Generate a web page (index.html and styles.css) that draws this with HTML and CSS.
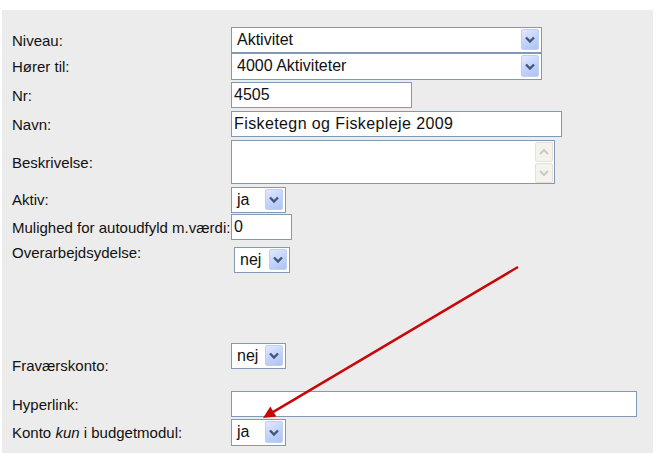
FILE: index.html
```html
<!DOCTYPE html>
<html lang="da">
<head>
<meta charset="utf-8">
<title>Konto</title>
<link rel="stylesheet" href="styles.css">
</head>
<body>
<div class="panel">
  <div class="row r-niveau">
    <div class="lbl">Niveau:</div>
    <div class="sel w-long"><span class="val">Aktivitet</span><span class="btn"><svg viewBox="0 0 18 21" width="18" height="21"><path d="M5 8.5 L9 12.5 L13 8.5" /></svg></span></div>
  </div>
  <div class="row r-horer">
    <div class="lbl">Hører til:</div>
    <div class="sel w-long"><span class="val">4000 Aktiviteter</span><span class="btn"><svg viewBox="0 0 18 21" width="18" height="21"><path d="M5 8.5 L9 12.5 L13 8.5" /></svg></span></div>
  </div>
  <div class="row r-nr">
    <div class="lbl">Nr:</div>
    <div class="inp w-nr">4505</div>
  </div>
  <div class="row r-navn">
    <div class="lbl">Navn:</div>
    <div class="inp w-navn">Fisketegn og Fiskepleje 2009</div>
  </div>
  <div class="row r-beskr">
    <div class="lbl">Beskrivelse:</div>
    <div class="area">
      <div class="area-text"></div>
      <div class="sbar">
        <span class="sbtn"><svg viewBox="0 0 18 20" width="18" height="20"><path d="M5 12 L9 8 L13 12" /></svg></span>
        <span class="sbtn"><svg viewBox="0 0 18 20" width="18" height="20"><path d="M5 8 L9 12 L13 8" /></svg></span>
      </div>
    </div>
  </div>
  <div class="row r-aktiv">
    <div class="lbl">Aktiv:</div>
    <div class="sel w-short"><span class="val">ja</span><span class="btn"><svg viewBox="0 0 18 21" width="18" height="21"><path d="M5 8.5 L9 12.5 L13 8.5" /></svg></span></div>
  </div>
  <div class="row r-mul">
    <div class="lbl">Mulighed for autoudfyld m.værdi:</div>
    <div class="inp w-mul">0</div>
  </div>
  <div class="row r-over">
    <div class="lbl">Overarbejdsydelse:</div>
    <div class="sel w-nej"><span class="val">nej</span><span class="btn"><svg viewBox="0 0 18 21" width="18" height="21"><path d="M5 8.5 L9 12.5 L13 8.5" /></svg></span></div>
  </div>
  <div class="row r-frav">
    <div class="lbl">Fraværskonto:</div>
    <div class="sel w-short"><span class="val">nej</span><span class="btn"><svg viewBox="0 0 18 21" width="18" height="21"><path d="M5 8.5 L9 12.5 L13 8.5" /></svg></span></div>
  </div>
  <div class="row r-hyper">
    <div class="lbl">Hyperlink:</div>
    <div class="inp w-hyper"></div>
  </div>
  <div class="row r-konto">
    <div class="lbl">Konto <i>kun</i> i budgetmodul:</div>
    <div class="sel w-short"><span class="val">ja</span><span class="btn"><svg viewBox="0 0 18 21" width="18" height="21"><path d="M5 8.5 L9 12.5 L13 8.5" /></svg></span></div>
  </div>
</div>
<svg class="annot" viewBox="0 0 658 453" width="658" height="453">
  <line x1="518" y1="267" x2="272.5" y2="412.4" />
  <polygon points="263,418 276.3,416.6 270.3,406.4" />
</svg>
</body>
</html>
```

FILE: styles.css
```css
html, body {
  margin: 0;
  padding: 0;
  background: #ffffff;
}

body {
  width: 658px;
  height: 453px;
  overflow: hidden;
  position: relative;
  font-family: "Liberation Sans", Arial, sans-serif;
  color: #111111;
}

.panel {
  margin: 10px 5px 0 2px;
  height: 443px;
  box-sizing: border-box;
  background: #ececec;
  padding: 17px 0 0 10px;
}

.row {
  display: flex;
  align-items: center;
  height: 26px;
}

.lbl {
  width: 219px;
  flex: none;
  font-size: 15px;
  line-height: 17px;
  white-space: nowrap;
}

.r-horer { height: 27px; }
.r-nr { margin-top: 2px; }
.r-navn { margin-top: 3px; }
.r-beskr { margin-top: 3px; height: 44px; }
.r-aktiv { margin-top: 3px; }
.r-aktiv .lbl { margin-top: -2px; }
.r-mul { margin-top: 1px; }
.r-over {
  margin-top: 3px;
  height: 97px;
  align-items: flex-start;
}
.r-over .lbl { padding-top: 1px; }
.r-over .sel { margin-top: 4px; margin-left: 3px; }
.r-frav {
  margin-top: 3px;
  height: 31px;
  align-items: flex-start;
}
.r-frav .lbl { align-self: flex-end; }
.r-hyper { margin-top: 17px; }
.r-konto { margin-top: 2px; height: 27px; }

/* fake select */
.sel {
  display: flex;
  box-sizing: border-box;
  height: 100%;
  border: 1px solid #8398b2;
  background: #ffffff;
  padding: 1px 2px 2px 0;
  font-size: 16px;
}
.r-over .sel, .r-frav .sel { height: 26px; }

.sel .val {
  flex: 1;
  padding-left: 5px;
  align-self: center;
  line-height: 18px;
  white-space: nowrap;
  overflow: hidden;
}

.btn {
  flex: none;
  width: 18px;
  box-sizing: border-box;
  border: 1px solid #c0d0f5;
  border-radius: 2px;
  background: linear-gradient(150deg, #e2eafe 0%, #c3d4fb 50%, #afc3f2 100%);
  display: flex;
  align-items: center;
  justify-content: center;
  overflow: hidden;
}
.btn svg { flex: none; }
.btn path {
  fill: none;
  stroke: #45567c;
  stroke-width: 2.4;
}

.w-long { width: 311px; }
.w-short { width: 55px; }
.w-nej { width: 56px; }

/* fake inputs */
.inp {
  box-sizing: border-box;
  height: 26px;
  border: 1px solid #8398b2;
  background: #ffffff;
  padding: 0 2px;
  font-size: 16px;
  line-height: 26px;
  white-space: nowrap;
  overflow: hidden;
  display: flex;
  align-items: center;
}
.w-nr { width: 181px; }
.w-navn { width: 331px; letter-spacing: 0.4px; }
.w-mul { width: 61px; }
.w-hyper { width: 406px; }

/* textarea */
.area {
  display: flex;
  box-sizing: border-box;
  width: 324px;
  height: 44px;
  border: 1px solid #8398b2;
  background: #ffffff;
  padding: 1px;
}
.area-text { flex: 1; }
.sbar {
  flex: none;
  width: 18px;
  display: flex;
  flex-direction: column;
  gap: 1px;
}
.sbtn {
  box-sizing: border-box;
  height: 20px;
  border: 1px solid #e2e0d8;
  border-radius: 2px;
  background: #f4f3ee;
  display: flex;
  align-items: center;
  justify-content: center;
}
.sbtn svg { flex: none; }
.sbtn path {
  fill: none;
  stroke: #cbc9bf;
  stroke-width: 1.8;
}

/* annotation arrow overlay */
.annot {
  position: absolute;
  left: 0;
  top: 0;
  pointer-events: none;
}
.annot line {
  stroke: #c80808;
  stroke-width: 2.4;
}
.annot polygon {
  fill: #c80808;
}
```
